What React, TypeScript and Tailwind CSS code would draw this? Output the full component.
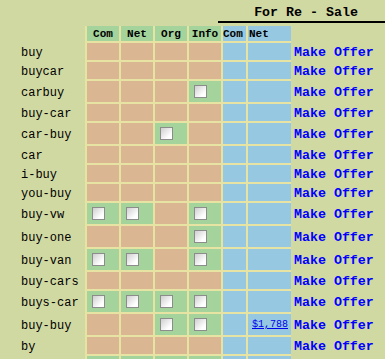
import * as React from "react";

type RowType = {
  label: string;
  boxes: [boolean, boolean, boolean, boolean];
  price?: string;
};

const rows: RowType[] = [
  { label: "buy", boxes: [false, false, false, false] },
  { label: "buycar", boxes: [false, false, false, false] },
  { label: "carbuy", boxes: [false, false, false, true] },
  { label: "buy-car", boxes: [false, false, false, false] },
  { label: "car-buy", boxes: [false, false, true, false] },
  { label: "car", boxes: [false, false, false, false] },
  { label: "i-buy", boxes: [false, false, false, false] },
  { label: "you-buy", boxes: [false, false, false, false] },
  { label: "buy-vw", boxes: [true, true, false, true] },
  { label: "buy-one", boxes: [false, false, false, true] },
  { label: "buy-van", boxes: [true, true, false, true] },
  { label: "buy-cars", boxes: [false, false, false, false] },
  { label: "buys-car", boxes: [true, true, true, true] },
  { label: "buy-buy", boxes: [false, false, true, true], price: "$1,788" },
  { label: "by", boxes: [false, false, false, false] },
  // only the top edge of this row is in view
  { label: "", boxes: [true, true, true, true] },
];

const CheckBox = () => (
  <span className="block w-[13px] h-[13px] border border-[#8c8c8c] bg-[linear-gradient(135deg,#cfcfcf,#ffffff_75%)]" />
);

export default function App() {
  return (
    <div className="h-[359px] w-[385px] overflow-hidden bg-[#d1d9a3] font-['Liberation_Mono',monospace] text-black">
      <div className="w-[440px]">
        {/* top title */}
        <div className="ml-[218px] w-[176px] pt-[5px] border-b-2 border-black text-center text-[13.3px] leading-[16px] font-bold">
          For Re - Sale
        </div>

        {/* column headers */}
        <div className="flex mt-[3px]">
          <div className="w-[85px]" />
          <div className="flex gap-[2px] bg-[#e6e3a3] pl-[2px] pb-[2px] text-[11px] font-bold leading-[16px]">
            {["Com", "Net", "Org", "Info"].map((h) => (
              <div key={h} className="w-[32px] h-[15px] bg-[#a4d39b] text-center">
                {h}
              </div>
            ))}
            <div className="w-[23px] h-[15px] bg-[#97c8e1]">Com</div>
            <div className="w-[43px] h-[15px] bg-[#97c8e1] pl-[1px]">Net</div>
          </div>
        </div>

        {rows.map((row, idx) => {
          const tall = row.boxes.some((b) => b);
          const h = tall ? "h-[21px]" : "h-[17px]";
          return (
            <div key={idx} className="flex">
              <div className="w-[85px] pl-[21px] pt-[1px] pb-[1px] flex items-center text-[12px] leading-[14px]">
                {row.label}
              </div>
              <div className="flex gap-[2px] bg-[#e6e3a3] pl-[2px] pb-[2px]">
                {row.boxes.map((b, i) => (
                  <div
                    key={i}
                    className={`w-[32px] ${h} ${
                      b ? "bg-[#a4d39b] pl-[5px] pt-[4px]" : "bg-[#dab692]"
                    }`}
                  >
                    {b && <CheckBox />}
                  </div>
                ))}
                <div className={`w-[23px] ${h} bg-[#97c8e1]`} />
                <div
                  className={`w-[43px] ${h} bg-[#97c8e1] flex items-center justify-end pr-[3px]`}
                >
                  {row.price && (
                    <a href="#" className="text-[10px] leading-[12px] text-[#0000ee] underline">
                      {row.price}
                    </a>
                  )}
                </div>
              </div>
              {row.label && (
                <div className="pl-[3px] pt-[1px] pb-[1px] flex items-center text-[13.3px] leading-[14px] font-bold text-[#0000ff]">
                  Make Offer
                </div>
              )}
            </div>
          );
        })}
      </div>
    </div>
  );
}
